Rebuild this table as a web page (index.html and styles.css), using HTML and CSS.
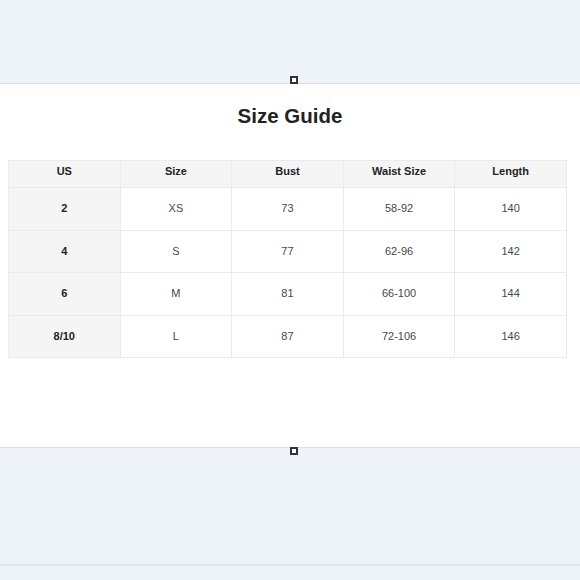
FILE: index.html
```html
<!DOCTYPE html>
<html>
<head>
<meta charset="utf-8">
<link rel="stylesheet" href="styles.css">
</head>
<body>
<div class="band band-top"></div>
<div class="panel">
  <span class="handle handle-top"></span>
  <h1 class="title">Size Guide</h1>
  <table class="sizes">
    <thead>
      <tr><th>US</th><th>Size</th><th>Bust</th><th>Waist Size</th><th>Length</th></tr>
    </thead>
    <tbody>
      <tr><td class="key">2</td><td>XS</td><td>73</td><td>58-92</td><td>140</td></tr>
      <tr><td class="key">4</td><td>S</td><td>77</td><td>62-96</td><td>142</td></tr>
      <tr><td class="key">6</td><td>M</td><td>81</td><td>66-100</td><td>144</td></tr>
      <tr><td class="key">8/10</td><td>L</td><td>87</td><td>72-106</td><td>146</td></tr>
    </tbody>
  </table>
  <span class="handle handle-bottom"></span>
</div>
<div class="band band-bottom">
  <div class="band-line"></div>
</div>
</body>
</html>
```
FILE: styles.css
```css
html, body {
  margin: 0;
  padding: 0;
  background: #eef2f9;
  font-family: "Liberation Sans", Arial, sans-serif;
}
.band {
  background: #eef2f9;
}
.band-top {
  height: 83px;
  border-bottom: 1px solid #d9dee6;
}
.panel {
  position: relative;
  background: #ffffff;
  height: 364px;
  padding-top: 1px;
  box-sizing: border-box;
  border-bottom: 1px solid #d9dee6;
}
.title {
  margin: 19px 0 0;
  text-align: center;
  font-size: 20.5px;
  font-weight: bold;
  color: #222;
  line-height: 24px;
}
.sizes {
  margin: 32px 0 0 8px;
  width: 559px;
  border-collapse: collapse;
  table-layout: fixed;
  font-size: 11px;
}
.sizes th, .sizes td {
  border: 1px solid #ebebeb;
  text-align: center;
  padding: 0;
  box-sizing: border-box;
}
.sizes th {
  height: 27px;
  padding-bottom: 6px;
  background: #f5f5f5;
  color: #222;
  font-weight: bold;
}
.sizes td {
  height: 42.5px;
  padding-bottom: 1px;
  color: #484848;
}
.sizes td.key {
  background: #f5f5f5;
  color: #222;
  font-weight: bold;
}
.handle {
  position: absolute;
  left: 290px;
  width: 4px;
  height: 4px;
  border: 2px solid #333;
  background: #fff;
}
.handle-top {
  top: -8px;
}
.handle-bottom {
  bottom: -8px;
}
.band-bottom {
  height: 132px;
  padding-top: 116px;
  box-sizing: border-box;
}
.band-line {
  height: 2px;
  background: #e2e6ec;
}
```
